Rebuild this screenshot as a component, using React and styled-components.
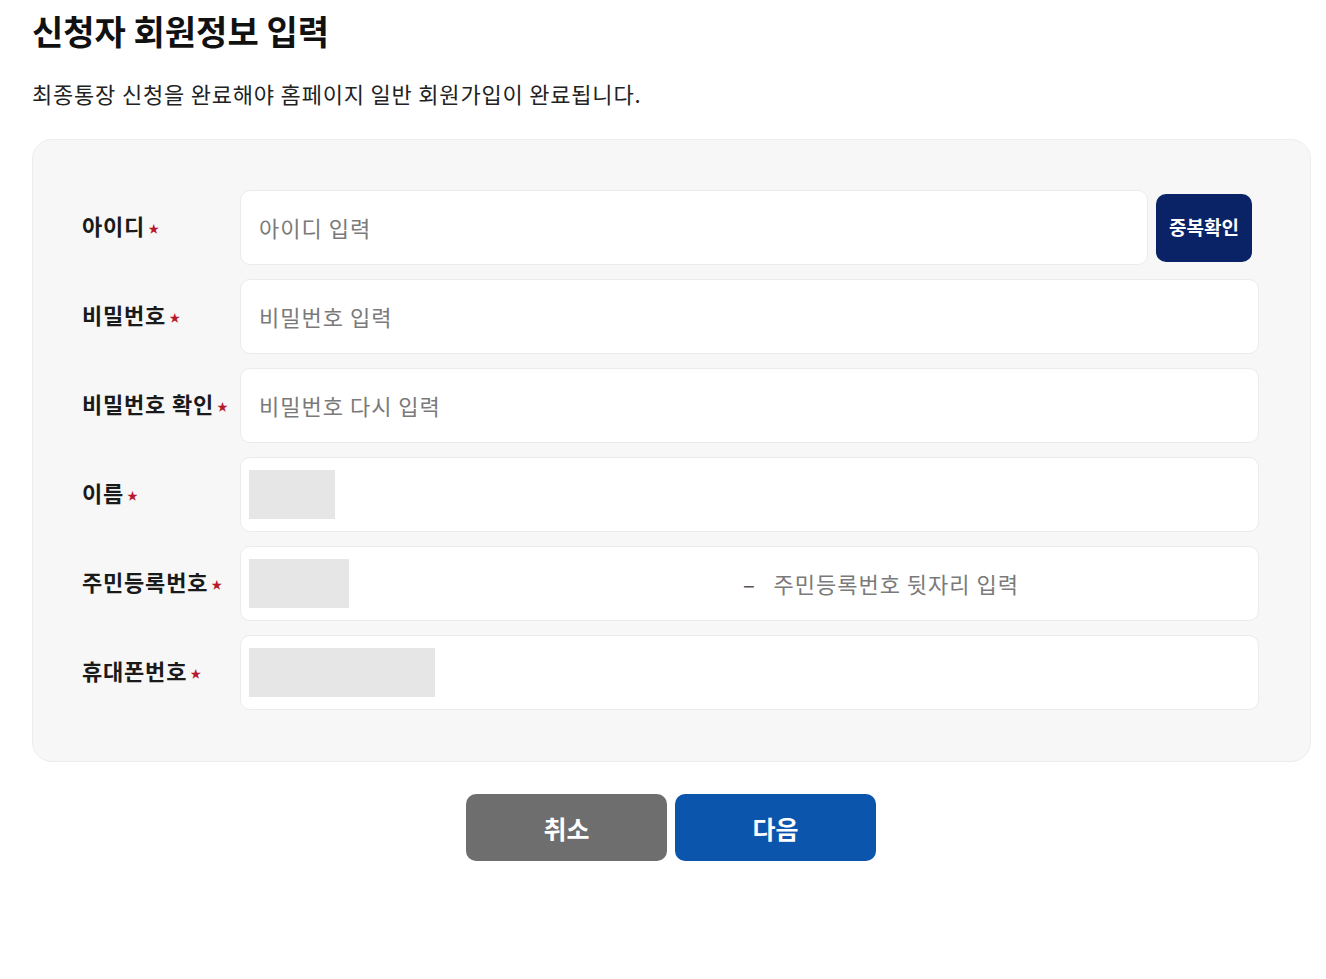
import React from "react";
import styled, { createGlobalStyle } from "styled-components";

const GlobalStyle = createGlobalStyle`
  body {
    margin: 0;
    background: #fff;
    font-family: "Noto Sans CJK KR", "Noto Sans", sans-serif;
    color: #111;
  }
`;

const Page = styled.div`
  width: 1279px;
  padding: 8px 0 40px 32px;
`;

const Title = styled.h1`
  margin: 0;
  font-size: 34px;
  font-weight: 700;
  line-height: 46px;
  color: #111;
`;

const Desc = styled.p`
  margin: 24px 0 0;
  font-size: 22px;
  line-height: 30px;
  color: #222;
  letter-spacing: 0.8px;
`;

const Panel = styled.div`
  margin-top: 31px;
  background: #f7f7f7;
  border: 1px solid #ececec;
  border-radius: 20px;
  padding: 50px 51px 51px 49px;
  display: flex;
  flex-direction: column;
  gap: 14px;
`;

const Row = styled.div`
  display: grid;
  grid-template-columns: 158px 1fr;
  align-items: center;
  height: 75px;
`;

const Label = styled.div`
  font-size: 22px;
  font-weight: 700;
  color: #1a1a1a;
  letter-spacing: 0.8px;
  display: flex;
  align-items: center;
  padding-bottom: 5px;
`;

const Star = styled.span`
  color: #b8172d;
  font-size: 11px;
  margin-left: 3px;
  margin-top: 6px;
`;

const FieldLine = styled.div`
  display: flex;
  align-items: center;
  gap: 8px;
  height: 100%;
`;

const Box = styled.div`
  flex: 1;
  height: 100%;
  box-sizing: border-box;
  background: #fff;
  border: 1px solid #ebebeb;
  border-radius: 10px;
  display: flex;
  align-items: center;
  padding: 0 ${(p) => (p.$inset ? "8px" : "18px")};
  padding-bottom: ${(p) => (p.$inset ? "0" : "2px")};
  font-size: 22px;
  color: #7a7a7a;
  letter-spacing: 1px;
`;

const Filled = styled.div`
  width: ${(p) => p.$w}px;
  height: 49px;
  background: #e6e6e6;
  flex-shrink: 0;
`;

const Half = styled.div`
  flex: 1;
  display: flex;
  align-items: center;
`;

const Dash = styled.span`
  width: 20px;
  text-align: center;
  color: #555;
  padding-bottom: 2px;
`;

const Placeholder = styled.span`
  padding-left: 14px;
  padding-bottom: 2px;
`;

const CheckButton = styled.button`
  width: 96px;
  height: 68px;
  margin-right: 7px;
  border: none;
  border-radius: 10px;
  background: #0a2266;
  color: #fff;
  font-family: inherit;
  font-size: 19px;
  font-weight: 700;
  flex-shrink: 0;
  padding: 0 0 2px;
`;

const Actions = styled.div`
  display: flex;
  justify-content: center;
  gap: 8px;
  margin-top: 32px;
  padding-right: 1px;
`;

const ActionButton = styled.button`
  width: 201px;
  height: 67px;
  border: none;
  border-radius: 10px;
  background: ${(p) => p.$bg};
  color: #fff;
  font-family: inherit;
  font-size: 25px;
  font-weight: 700;
`;

const fields = [
  { label: "아이디", placeholder: "아이디 입력", check: true },
  { label: "비밀번호", placeholder: "비밀번호 입력" },
  { label: "비밀번호 확인", placeholder: "비밀번호 다시 입력" },
  { label: "이름", filled: 86 },
  { label: "주민등록번호", filled: 100, rrn: true },
  { label: "휴대폰번호", filled: 186 },
];

function Field({ f }) {
  if (f.rrn) {
    return (
      <Box $inset>
        <Half>
          <Filled $w={f.filled} />
        </Half>
        <Dash>–</Dash>
        <Half>
          <Placeholder>주민등록번호 뒷자리 입력</Placeholder>
        </Half>
      </Box>
    );
  }
  if (f.filled) {
    return (
      <Box $inset>
        <Filled $w={f.filled} />
      </Box>
    );
  }
  return <Box>{f.placeholder}</Box>;
}

export default function App() {
  return (
    <>
      <GlobalStyle />
      <Page>
        <Title>신청자 회원정보 입력</Title>
        <Desc>최종통장 신청을 완료해야 홈페이지 일반 회원가입이 완료됩니다.</Desc>
        <Panel>
          {fields.map((f) => (
            <Row key={f.label}>
              <Label>
                {f.label}
                <Star>★</Star>
              </Label>
              <FieldLine>
                <Field f={f} />
                {f.check && <CheckButton>중복확인</CheckButton>}
              </FieldLine>
            </Row>
          ))}
        </Panel>
        <Actions>
          <ActionButton $bg="#6e6e6e">취소</ActionButton>
          <ActionButton $bg="#0b55ad">다음</ActionButton>
        </Actions>
      </Page>
    </>
  );
}
